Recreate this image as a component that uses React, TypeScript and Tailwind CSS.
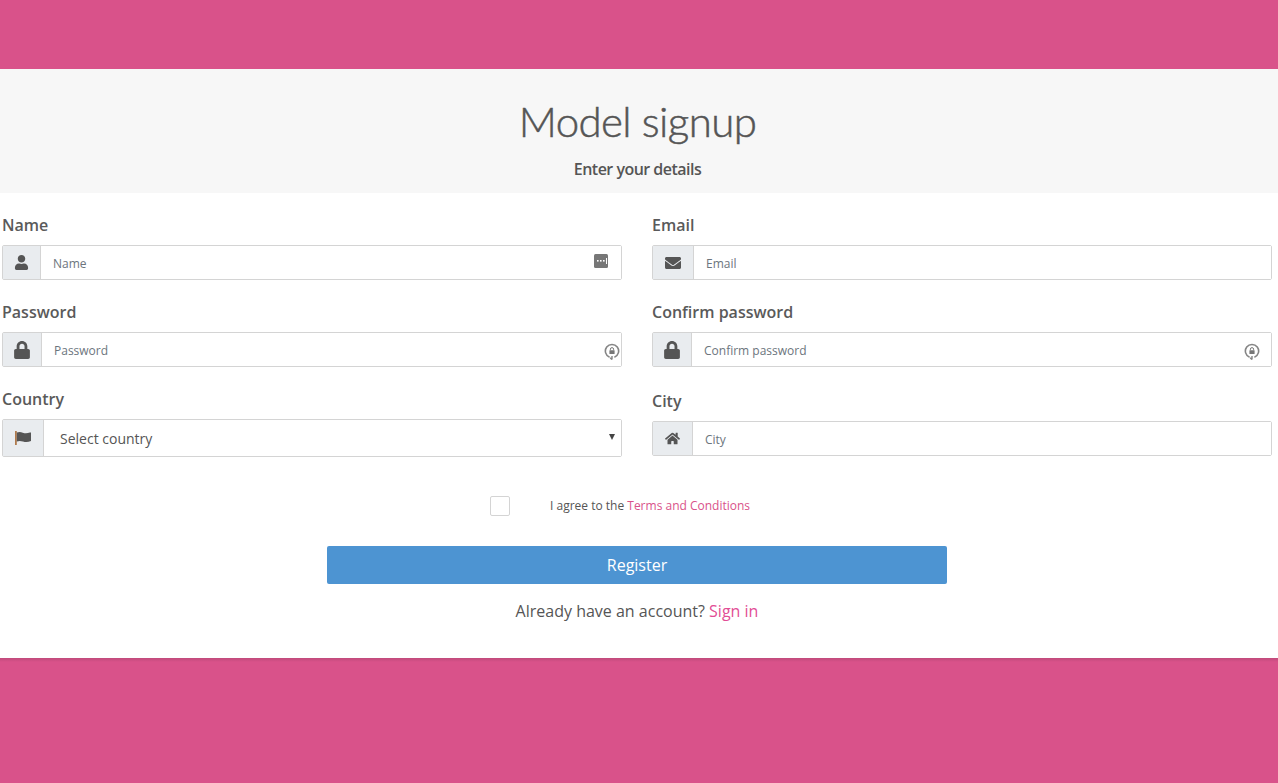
import React from "react";
import { FaUser, FaEnvelope, FaLock, FaHome } from "react-icons/fa";

const font = "font-['Open_Sans',sans-serif]";

const PasswordKey: React.FC<{ offset: string }> = ({ offset }) => (
  <svg width="16" height="17" viewBox="0 0 16 17" className={`absolute top-[10px] ${offset}`}>
    <path d="M5.6 14.2A6.6 6.6 0 1 1 10.4 14.2" fill="none" stroke="#858585" strokeWidth="1.6" />
    <rect x="5.4" y="7.2" width="5.2" height="3.8" rx="0.5" fill="#777777" />
    <path d="M6.4 7.2V6.2a1.6 1.6 0 0 1 3.2 0v1" fill="none" stroke="#777777" strokeWidth="1" />
    <path d="M8 13v3.6M6.2 14.8l1.8 1.8" fill="none" stroke="#858585" strokeWidth="1.4" />
  </svg>
);

const AutofillCard: React.FC = () => (
  <svg width="15" height="14" viewBox="0 0 15 14" className="absolute top-[8px] right-[12px]">
    <rect x="0" y="0" width="14" height="14" rx="1.5" fill="#777777" />
    <rect x="3" y="6" width="1.6" height="1.6" fill="#ffffff" />
    <rect x="6" y="6" width="1.6" height="1.6" fill="#ffffff" />
    <rect x="9" y="6" width="1.6" height="1.6" fill="#ffffff" />
    <rect x="12" y="4" width="1" height="6" fill="#ffffff" />
  </svg>
);

const FlagIcon: React.FC = () => (
  <svg width="16" height="14" viewBox="0 0 16 14">
    <rect x="0" y="0" width="1.8" height="14" fill="#b07a4c" />
    <path d="M1.8 1.6c2.4-.9 4-.6 6 .1 2.4.8 4.6.7 7.2-.3l1 .1v8.6c-2.9 1.1-5.4 1.2-8 .4-2.2-.7-3.8-.9-6.2-.1z" fill="#555555" />
  </svg>
);

type FieldProps = {
  label: string;
  placeholder: string;
  icon: React.ReactNode;
  addonWidth: string;
  trailing?: React.ReactNode;
};

const Field: React.FC<FieldProps> = ({ label, placeholder, icon, addonWidth, trailing }) => (
  <div>
    <label className="block h-[20px] text-[16px] leading-[20px] font-semibold text-[#5a5a5a]">{label}</label>
    <div className="mt-[10px] flex h-[35px] rounded-[2px] border border-[#d4d4d4]">
      <div className={`flex shrink-0 items-center justify-center border-r border-[#d4d4d4] bg-[#e9ecef] ${addonWidth}`}>
        {icon}
      </div>
      <div className="relative flex-1">
        <input
          placeholder={placeholder}
          className="h-full w-full bg-white pt-[2px] pl-[12px] text-[12px] outline-none placeholder:text-[#6c757d]"
        />
        {trailing}
      </div>
    </div>
  </div>
);

export default function App() {
  return (
    <div className={`flex min-h-[783px] flex-col bg-[#d9528a] ${font}`}>
      <div className="h-[69px]" />

      <div className="flex h-[124px] flex-col items-center bg-[#f7f7f7] pr-[3px] text-[#555555]">
        <h1 className="mt-[25px] font-['Lato',sans-serif] text-[42px] leading-[54px] font-light tracking-[-0.6px] [-webkit-text-stroke:0.5px_#555555]">
          Model signup
        </h1>
        <p className="mt-[10px] text-[16px] leading-[22px] font-semibold tracking-[-0.52px]">Enter your details</p>
      </div>

      <div className="h-[465px] bg-white pt-[22px] pr-[6px] pl-[2px]">
        <div className="grid grid-cols-2 gap-x-[30px]">
          <div className="flex flex-col gap-[22px]">
            <Field
              label="Name"
              placeholder="Name"
              icon={<FaUser className="text-[15px] text-[#555555]" />}
              addonWidth="w-[38px]"
              trailing={<AutofillCard />}
            />
            <Field
              label="Password"
              placeholder="Password"
              icon={<FaLock className="text-[18px] text-[#555555]" />}
              addonWidth="w-[39px]"
              trailing={<PasswordKey offset="right-[1px]" />}
            />
            <div>
              <label className="block h-[20px] text-[16px] leading-[20px] font-semibold text-[#5a5a5a]">Country</label>
              <div className="mt-[10px] flex h-[38px] rounded-[2px] border border-[#d4d4d4]">
                <div className="flex w-[41px] shrink-0 items-center justify-center border-r border-[#d4d4d4] bg-[#e9ecef]">
                  <FlagIcon />
                </div>
                <div className="relative flex flex-1 items-center bg-white pl-[16px] text-[14px] text-[#555555]">
                  Select country
                  <svg width="6" height="6" viewBox="0 0 6 6" className="absolute top-[14px] right-[6px]">
                    <path d="M0 0h6L3 6z" fill="#444444" />
                  </svg>
                </div>
              </div>
            </div>
          </div>

          <div className="flex flex-col gap-[22px]">
            <Field
              label="Email"
              placeholder="Email"
              icon={<FaEnvelope className="text-[16px] text-[#555555]" />}
              addonWidth="w-[41px]"
            />
            <Field
              label="Confirm password"
              placeholder="Confirm password"
              icon={<FaLock className="text-[18px] text-[#555555]" />}
              addonWidth="w-[39px]"
              trailing={<PasswordKey offset="right-[11px]" />}
            />
            <div className="mt-[2px]">
              <Field
                label="City"
                placeholder="City"
                icon={<FaHome className="text-[15px] text-[#555555]" />}
                addonWidth="w-[40px]"
              />
            </div>
          </div>
        </div>

        <div className="mt-[39px] flex h-[20px] items-center pl-[488px]">
          <span className="h-[20px] w-[20px] rounded-[2px] border border-[#d4d4d4] bg-white" />
          <span className="ml-[40px] text-[12px] text-[#555555]">
            I agree to the <a className="text-[#d9528a]">Terms and Conditions</a>
          </span>
        </div>

        <button className="mt-[30px] ml-[325px] block h-[38px] w-[620px] rounded-[2px] bg-[#4d94d2] text-[16px] font-medium text-white">
          Register
        </button>

        <p className="mt-[15px] ml-[-2px] w-[1274px] text-center text-[16px] leading-[24px] text-[#555555]">
          Already have an account? <a className="text-[#e24d95]">Sign in</a>
        </p>
      </div>

      <div className="h-[4px] bg-gradient-to-b from-[#c04a7b] to-[#d9528a]" />
      <div className="flex-1" />
    </div>
  );
}
